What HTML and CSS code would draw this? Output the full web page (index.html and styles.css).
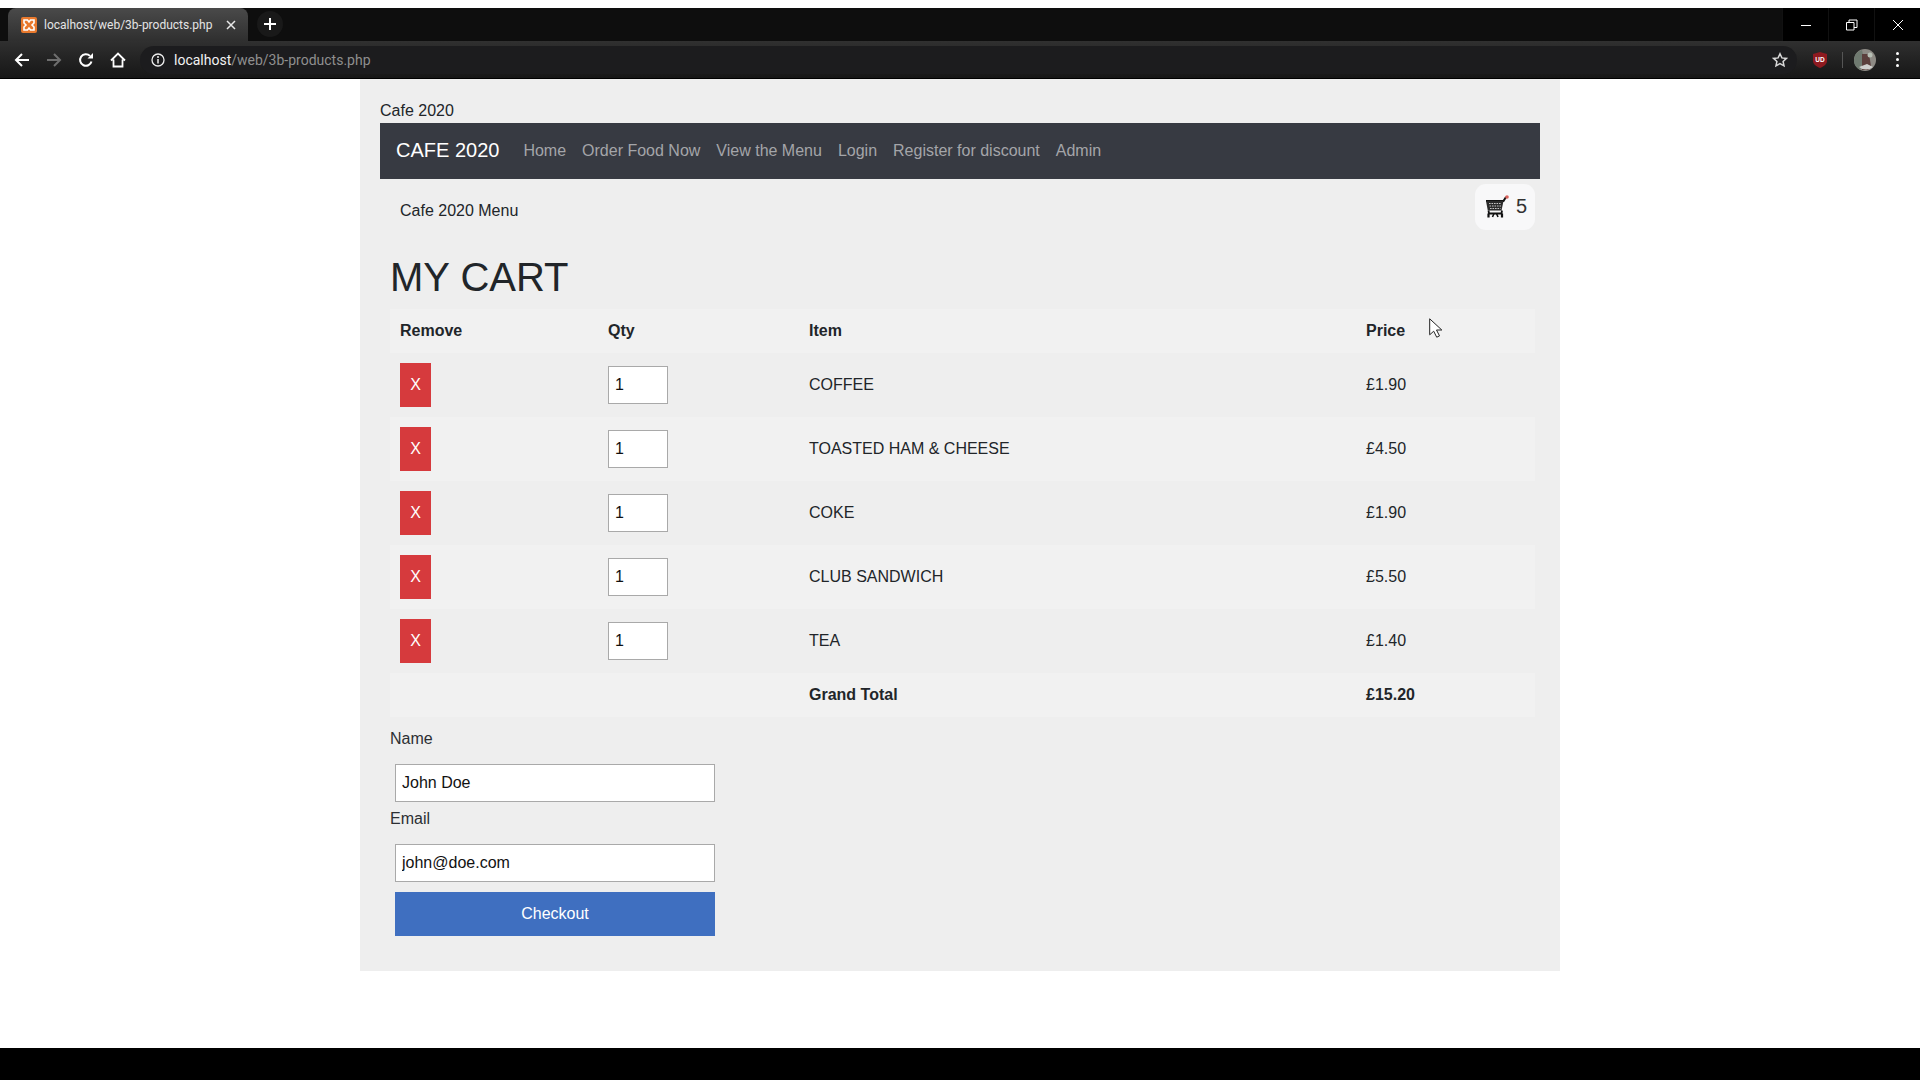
FILE: index.html
```html
<!DOCTYPE html>
<html lang="en">
<head>
<meta charset="utf-8">
<title>localhost/web/3b-products.php</title>
<link rel="stylesheet" href="styles.css">
</head>
<body>
<div class="topgap"></div>
<header class="chrome">
  <div class="tabstrip">
    <div class="tab">
      <svg class="favicon" viewBox="0 0 16 16" width="16" height="16"><rect width="16" height="16" rx="2" fill="#e9792d"/><path d="M3 3h3.500l1.500 2 1.500-2H13v3l-2 2 2 2v3H9.500L8 11l-1.500 2H3v-3l2-2-2-2z" fill="none" stroke="#fff" stroke-width="1.600"/></svg>
      <span class="tabtitle">localhost/web/3b-products.php</span>
      <svg class="tabclose" viewBox="0 0 10 10" width="10" height="10"><path d="M1 1l8 8M9 1l-8 8" stroke="#e8e8e8" stroke-width="1.500"/></svg>
    </div>
    <div class="newtab"><svg viewBox="0 0 12 12" width="12" height="12"><path d="M6 0v12M0 6h12" stroke="#fff" stroke-width="2"/></svg></div>
    <div class="winbtns">
      <div class="winbtn"><svg viewBox="0 0 12 12" width="12" height="12"><path d="M1 6.500h10" stroke="#fff" stroke-width="1"/></svg></div>
      <div class="winbtn"><svg viewBox="0 0 12 12" width="12" height="12"><path d="M.5 3.500h7.500v7.500H.5zM3 3.500V1h8v7.500H8" fill="none" stroke="#fff" stroke-width="1"/></svg></div>
      <div class="winbtn"><svg viewBox="0 0 12 12" width="12" height="12"><path d="M1 1l10 10M11 1L1 11" stroke="#fff" stroke-width="1"/></svg></div>
    </div>
  </div>
  <div class="toolbar">
    <svg class="tool first" viewBox="0 0 16 16" width="16" height="16"><path d="M15 8H2M8 2L2 8l6 6" fill="none" stroke="#fff" stroke-width="2"/></svg>
    <svg class="tool" viewBox="0 0 16 16" width="16" height="16"><path d="M1 8h13M8 2l6 6-6 6" fill="none" stroke="#6e6e6e" stroke-width="2"/></svg>
    <svg class="tool" viewBox="0 0 16 16" width="16" height="16"><path d="M13.500 9.500A5.800 5.800 0 1 1 12 3.900" fill="none" stroke="#fff" stroke-width="2"/><path d="M9.500 6.500h5.500V1z" fill="#fff"/></svg>
    <svg class="tool" viewBox="0 0 16 16" width="16" height="16"><path d="M1 8.500L8 1.500l7 7M3.500 7.500V14.500h9V7.500" fill="none" stroke="#fff" stroke-width="1.800"/></svg>
    <div class="omnibox">
      <svg viewBox="0 0 14 14" width="14" height="14"><circle cx="7" cy="7" r="6" fill="none" stroke="#eee" stroke-width="1.300"/><path d="M7 6v4.500" stroke="#eee" stroke-width="1.500"/><circle cx="7" cy="4" r="1" fill="#eee"/></svg>
      <span class="url"><b>localhost</b><span class="urlrest">/web/3b-products.php</span></span>
      <svg class="star" viewBox="0 0 16 16" width="16" height="16"><path d="M8 1.800l1.900 4.100 4.500.5-3.300 3 .9 4.400L8 11.600l-4 2.200.9-4.400-3.300-3 4.500-.5z" fill="none" stroke="#d8d8d8" stroke-width="1.500"/></svg>
    </div>
    <svg class="ublock" viewBox="0 0 14 16" width="14" height="16"><path d="M7 0l7 2v7c0 3.500-3.500 5.500-7 7-3.500-1.500-7-3.500-7-7V2z" fill="#8e1a20"/><text x="7" y="9.500" class="ubtext" text-anchor="middle">UD</text></svg>
    <div class="sep"></div>
    <svg class="avatar" viewBox="0 0 22 22" width="22" height="22"><circle cx="11" cy="11" r="11" fill="#8d8a84"/><path d="M0 11a11 11 0 0 1 8-10l2 9-4 11A11 11 0 0 1 0 11z" fill="#6f7a70"/><path d="M8 5h7l2 12-3 4H8z" fill="#5b3f3c"/><path d="M5 18l8-3 6 3a11 11 0 0 1-14 0z" fill="#cfcfcd"/><circle cx="16" cy="6" r="2.500" fill="#b7bfb5"/></svg>
    <div class="kebab"><i></i><i></i><i></i></div>
  </div>
</header>
<main class="viewport">
  <div class="wrap">
    <div class="sitetitle">Cafe 2020</div>
    <nav class="navbar">
      <a class="brand">CAFE 2020</a>
      <a class="navlink">Home</a>
      <a class="navlink">Order Food Now</a>
      <a class="navlink">View the Menu</a>
      <a class="navlink">Login</a>
      <a class="navlink">Register for discount</a>
      <a class="navlink">Admin</a>
    </nav>
    <div class="subhead">
      <div class="menutitle">Cafe 2020 Menu</div>
      <div class="cartbadge">
        <svg viewBox="0 0 24 23" width="24" height="23"><path d="M1 6h17.500L21 2" fill="none" stroke="#111" stroke-width="2"/><circle cx="22" cy="2" r="1.800" fill="#d9605a"/><path d="M1 6l1.800 9.500h13.700L18.500 6z" fill="#2a2a2a"/><path d="M4 8.500h12.500M4.500 11h11.500M5 13.500h10.500" stroke="#c4c4c4" stroke-width="1.100" stroke-dasharray="1.600 .9"/><path d="M3.500 15.500l.5 3h12.500l.5-3" fill="none" stroke="#111" stroke-width="1.800"/><path d="M3.500 22.500v-4M17 22.500v-4" stroke="#111" stroke-width="2.200"/><path d="M7.500 22l1.500-3.500M13 22l-1.500-3.500" stroke="#111" stroke-width="1.600"/></svg>
        <span class="cartcount">5</span>
      </div>
    </div>
    <h1 class="carttitle">MY CART</h1>
    <table class="cart">
      <colgroup><col class="c1"><col class="c2"><col class="c3"><col class="c4"></colgroup>
      <thead>
        <tr class="head"><th>Remove</th><th>Qty</th><th>Item</th><th>Price</th></tr>
      </thead>
      <tbody>
        <tr class="row"><td><button class="remove">X</button></td><td><input class="qty" value="1"></td><td>COFFEE</td><td>£1.90</td></tr>
        <tr class="row alt"><td><button class="remove">X</button></td><td><input class="qty" value="1"></td><td>TOASTED HAM &amp; CHEESE</td><td>£4.50</td></tr>
        <tr class="row"><td><button class="remove">X</button></td><td><input class="qty" value="1"></td><td>COKE</td><td>£1.90</td></tr>
        <tr class="row alt"><td><button class="remove">X</button></td><td><input class="qty" value="1"></td><td>CLUB SANDWICH</td><td>£5.50</td></tr>
        <tr class="row"><td><button class="remove">X</button></td><td><input class="qty" value="1"></td><td>TEA</td><td>£1.40</td></tr>
        <tr class="total"><td></td><td></td><th>Grand Total</th><th>£15.20</th></tr>
      </tbody>
    </table>
    <form class="checkout">
      <label class="lbl">Name</label>
      <input class="field" value="John Doe">
      <label class="lbl">Email</label>
      <input class="field" value="john@doe.com">
      <button class="go" type="button">Checkout</button>
    </form>
    <svg class="cursor" viewBox="0 0 13 20" width="13" height="20"><path d="M.7.8v16l4-3.600 3 6 2.800-1.300-3-5.900h5.300z" fill="#fff" stroke="#222" stroke-width="1"/></svg>
  </div>
</main>
<div class="bottombar"></div>
</body>
</html>
```
FILE: styles.css
```css
* { box-sizing: border-box; }
html, body { margin: 0; height: 100%; }
body {
  display: flex;
  flex-direction: column;
  height: 1080px;
  overflow: hidden;
  background: #fff;
  font-family: "Liberation Sans", Arial, sans-serif;
  color: #212529;
}
.topgap { height: 8px; background: #fff; flex: none; }
.chrome { flex: none; height: 71px; background: #0d0d0d; }
.tabstrip { height: 33px; display: flex; align-items: flex-end; background: #0e0e0e; }
.tab {
  margin-left: 8px;
  width: 240px;
  height: 33px;
  border-radius: 8px 8px 0 0;
  background: linear-gradient(#4a4a4a, #2f2f2f);
  display: flex;
  align-items: center;
  padding: 0 0 0 13px;
}
.favicon { flex: none; }
.tabtitle { margin-left: 7px; font: 12px "Roboto", "Liberation Sans", sans-serif; color: #e4e4e4; width: 170px; white-space: nowrap; }
.tabclose { margin-left: 12px; flex: none; }
.newtab {
  width: 26px; height: 26px; margin: 0 0 4px 9px; border-radius: 50%;
  background: #191919; display: flex; align-items: center; justify-content: center;
}
.winbtns { margin-left: auto; display: flex; height: 33px; background: #000; }
.winbtn { width: 46px; display: flex; align-items: center; justify-content: center; border-left: 1px solid #111; }
.toolbar {
  height: 38px;
  display: flex;
  align-items: center;
  background: linear-gradient(#303030, #202020 60%, #171717);
  border-bottom: 1px solid #000;
}
.tool { flex: none; margin-left: 16px; }
.tool.first { margin-left: 14px; }
.omnibox {
  flex: 1;
  margin-left: 14px;
  height: 28px;
  border-radius: 14px;
  background: #1c1c1e;
  display: flex;
  align-items: center;
  padding: 0 9px 0 11px;
}
.url { margin-left: 9px; font: 14px "Roboto", "Liberation Sans", sans-serif; color: #f2f2f2; }
.url b { font-weight: 400; }
.urlrest { color: #8f8f8f; }
.star { margin-left: auto; }
.ublock { flex: none; margin-left: 16px; }
.ubtext { font: 700 6.500px "Liberation Sans", sans-serif; fill: #fff; }
.sep { width: 1px; height: 16px; background: #555; margin-left: 15px; }
.avatar { flex: none; margin-left: 11px; }
.kebab { margin: 0 21px 0 20px; display: flex; flex-direction: column; gap: 3px; }
.kebab i { display: block; width: 3px; height: 3px; border-radius: 50%; background: #fff; }

.viewport { flex: 1; min-height: 0; background: #fff; display: flex; justify-content: center; }
.wrap {
  position: relative;
  width: 1200px;
  height: 892px;
  background: #eee;
  padding: 22px 20px 0;
}
.cursor { position: absolute; left: 1069px; top: 239px; }
.sitetitle { font-size: 16px; line-height: 20px; height: 22px; }
.navbar {
  height: 56px;
  background: #373a42;
  display: flex;
  align-items: center;
  padding: 0 16px 1px;
}
.brand { font-size: 20px; color: #fff; margin-right: 16px; }
.navlink { font-size: 16px; color: #a4a5a9; padding: 0 8px; }
.subhead {
  height: 52px;
  display: flex;
  justify-content: space-between;
  padding: 0 5px 0 20px;
}
.menutitle { font-size: 16px; line-height: 20px; margin-top: 22px; }
.cartbadge {
  margin-top: 5px;
  width: 60px;
  height: 46px;
  background: #f8f8f9;
  border-radius: 11px;
  display: flex;
  align-items: center;
  padding: 0 0 2px 10px;
  gap: 7px;
}
.cartcount { font-size: 20px; color: #333; }
.carttitle {
  margin: 0 0 0 10px;
  height: 78px;
  font-size: 40px;
  font-weight: 400;
  line-height: 46px;
  padding-top: 23px;
}
.cart { margin-left: 10px; width: 1145px; border-collapse: collapse; table-layout: fixed; font-size: 16px; }
.c1 { width: 208px; }
.c2 { width: 201px; }
.c3 { width: 557px; }
.c4 { width: 179px; }
.cart th, .cart td { padding: 0 0 0 10px; text-align: left; vertical-align: middle; }
.cart th { font-weight: 700; }
.head { height: 44px; background: #f1f1f1; }
.row { height: 64px; }
.alt { background: #f1f1f1; }
.total { height: 44px; background: #f1f1f1; }
.remove {
  display: block;
  width: 31px;
  height: 44px;
  border: 0;
  padding: 0;
  background: #d63a3d;
  color: #fff;
  font: 16px "Liberation Sans", Arial, sans-serif;
}
.qty {
  display: block;
  width: 60px;
  height: 38px;
  border: 1px solid #a9a9a9;
  background: #fff;
  padding: 0 6px;
  font: 16px "Liberation Sans", Arial, sans-serif;
  color: #111;
}
.checkout { display: flex; flex-direction: column; align-items: flex-start; margin: 10px 0 0 10px; }
.lbl { font-size: 16px; line-height: 24px; height: 37px; color: #2c2f33; }
.lbl + .field + .lbl { height: 34px; margin-top: 5px; margin-bottom: 3px; }
.field {
  display: block;
  margin-left: 5px;
  width: 320px;
  height: 38px;
  border: 1px solid #a9a9a9;
  background: #fff;
  padding: 0 6px;
  font: 16px "Liberation Sans", Arial, sans-serif;
  color: #111;
}
.go {
  margin: 10px 0 0 5px;
  width: 320px;
  height: 44px;
  border: 0;
  padding: 0;
  background: #3f6fc0;
  color: #fff;
  font: 16px "Liberation Sans", Arial, sans-serif;
}
.bottombar { flex: none; height: 32px; background: #000; }
```
